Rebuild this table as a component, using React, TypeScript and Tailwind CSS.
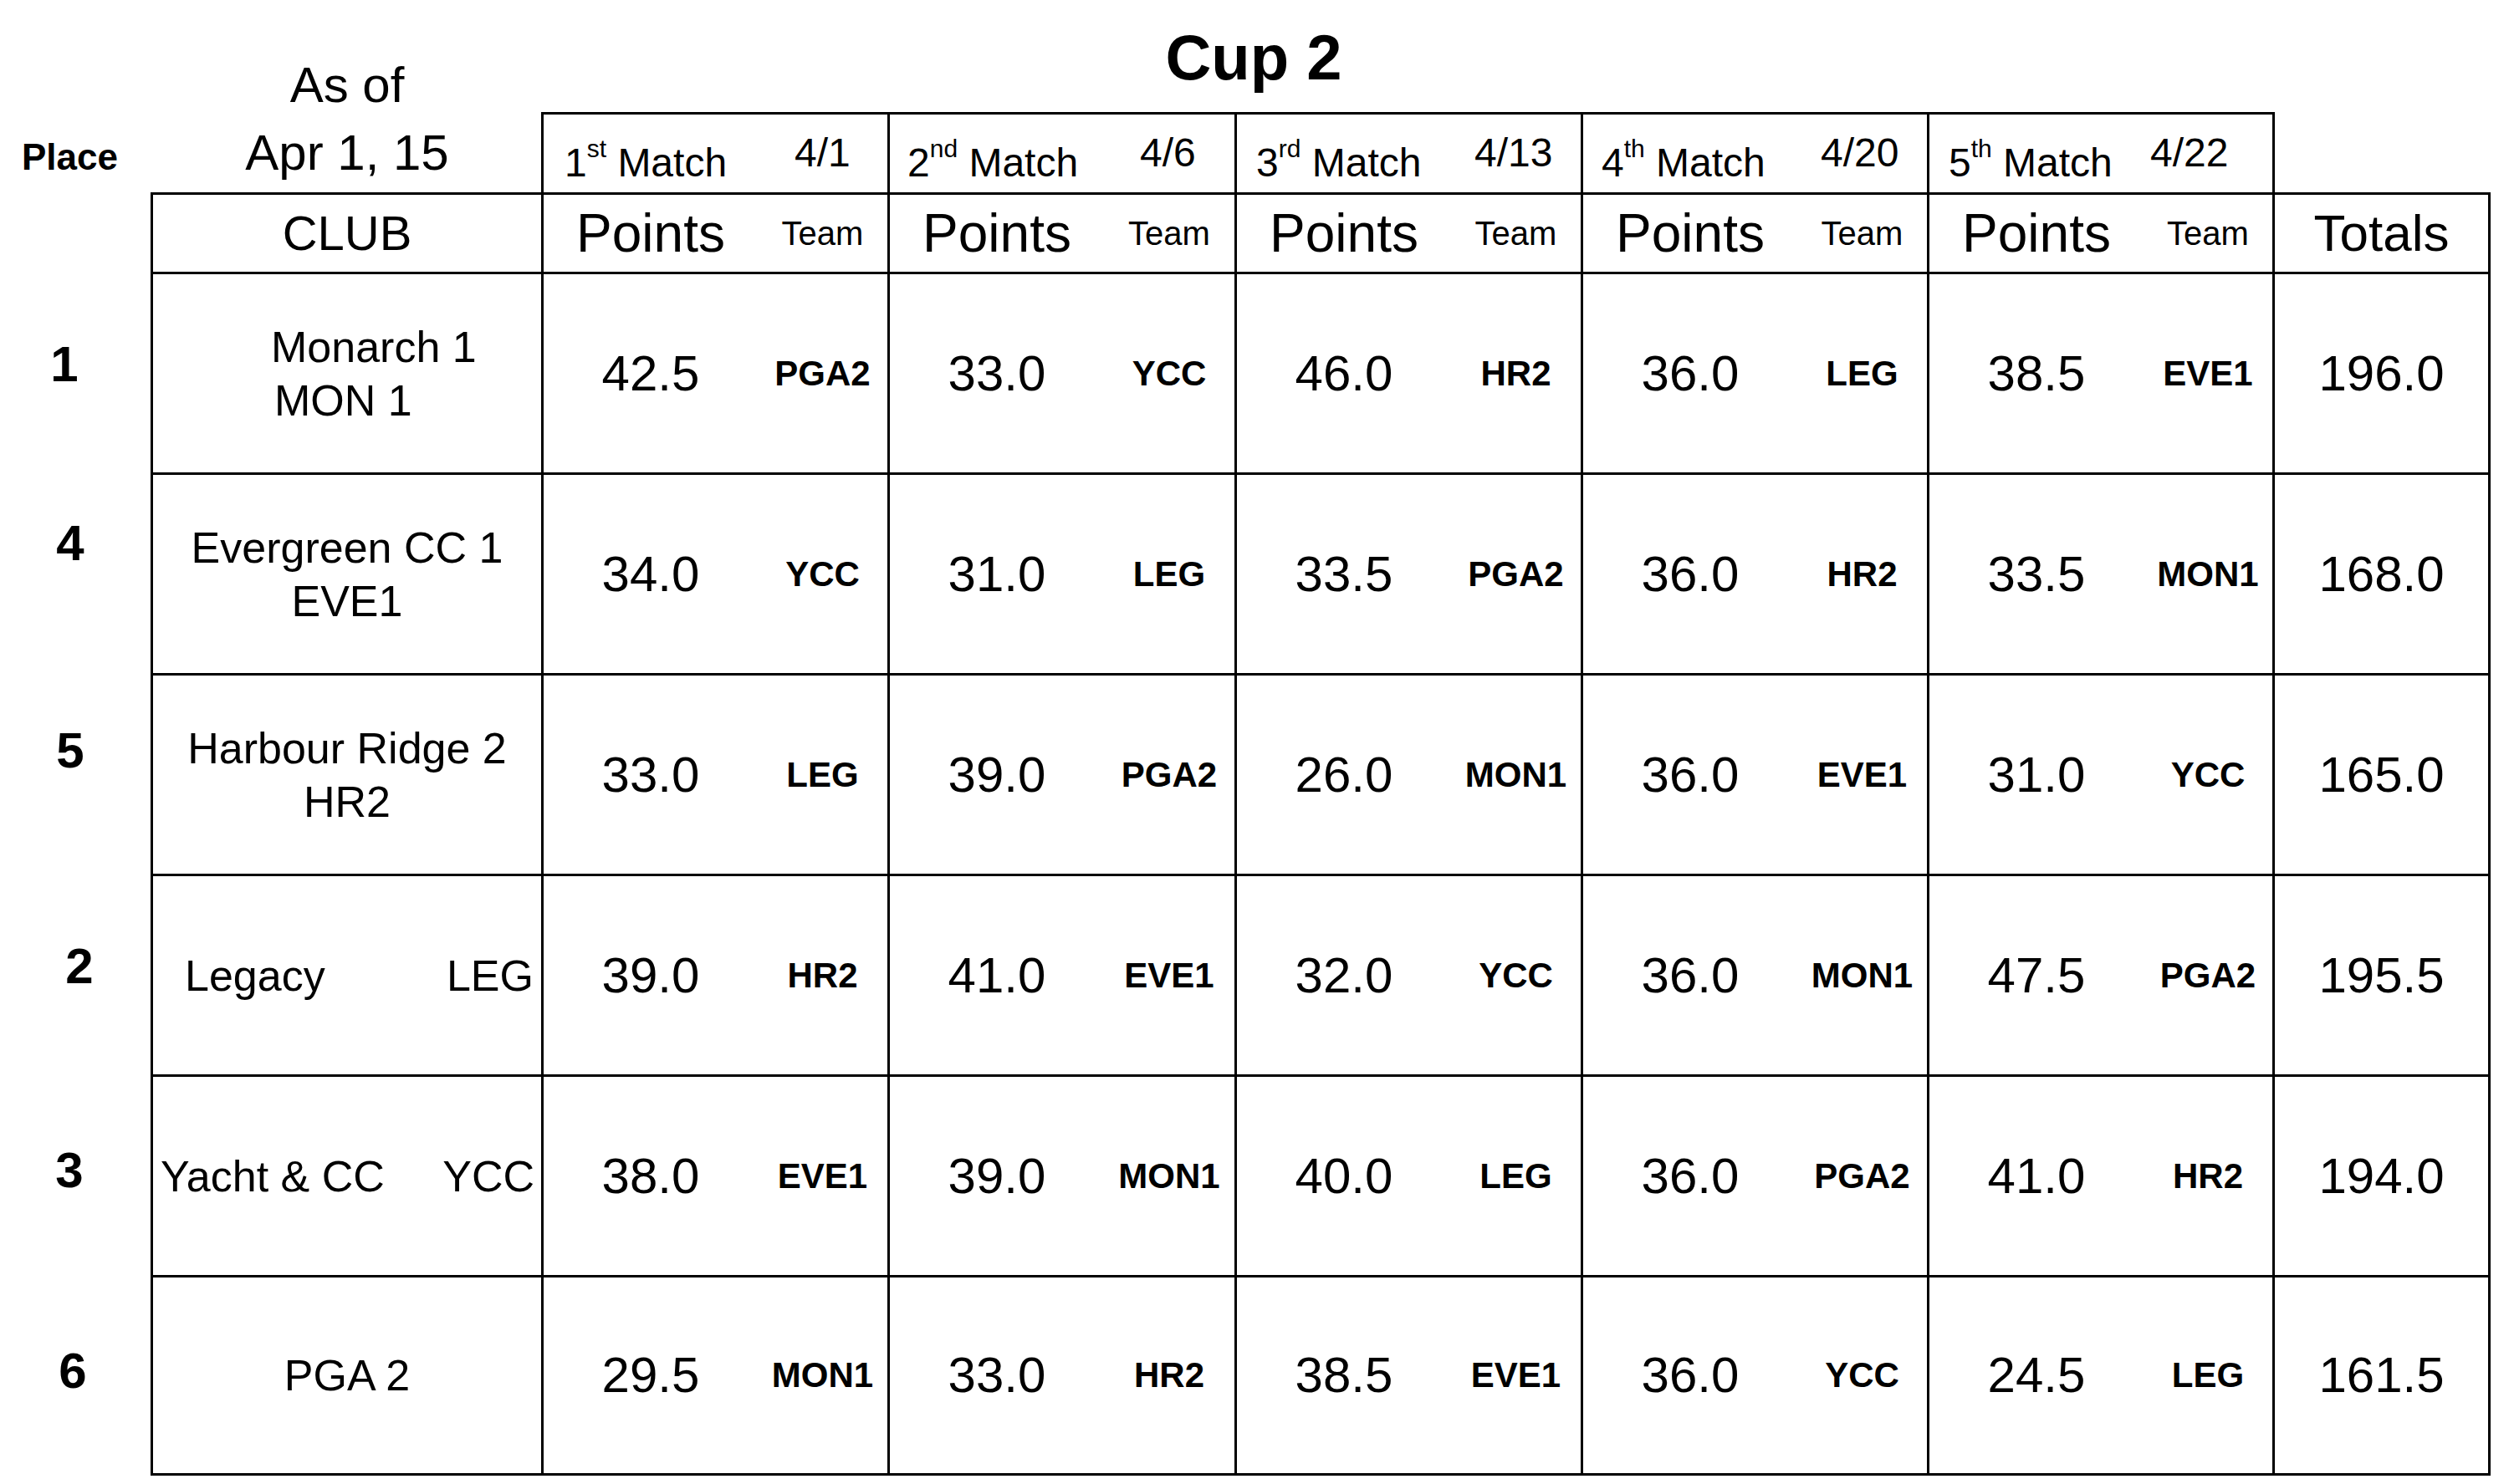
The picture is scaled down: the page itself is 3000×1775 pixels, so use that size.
const matches = [
  { n: "1", sup: "st", date: "4/1", pl: "pl-[25px]", lw: "w-[275px]", w: "w-[414px]" },
  { n: "2", sup: "nd", date: "4/6", pl: "pl-[21px]", lw: "w-[278px]", w: "w-[415px]" },
  { n: "3", sup: "rd", date: "4/13", pl: "pl-[23px]", lw: "w-[261px]", w: "w-[414px]" },
  { n: "4", sup: "th", date: "4/20", pl: "pl-[22px]", lw: "w-[262px]", w: "w-[414px]" },
  { n: "5", sup: "th", date: "4/22", pl: "pl-[23px]", lw: "w-[241px]", w: "w-[413px]" },
];

type Row = {
  place: string;
  placeCls: string;
  club: React.ReactNode;
  results: [string, string][];
  total: string;
};

const rows: Row[] = [
  {
    place: "1",
    placeCls: "pb-[18px] ml-[60px]",
    club: (
      <div className="flex flex-col items-start pl-[141px] leading-[64px]">
        <span>Monarch 1</span>
        <span className="ml-[4px]">MON 1</span>
      </div>
    ),
    results: [["42.5", "PGA2"], ["33.0", "YCC"], ["46.0", "HR2"], ["36.0", "LEG"], ["38.5", "EVE1"]],
    total: "196.0",
  },
  {
    place: "4",
    placeCls: "pb-[70px] ml-[67px]",
    club: (
      <div className="flex flex-col items-center leading-[64px]">
        <span>Evergreen CC 1</span>
        <span>EVE1</span>
      </div>
    ),
    results: [["34.0", "YCC"], ["31.0", "LEG"], ["33.5", "PGA2"], ["36.0", "HR2"], ["33.5", "MON1"]],
    total: "168.0",
  },
  {
    place: "5",
    placeCls: "pb-[54px] ml-[67px]",
    club: (
      <div className="flex flex-col items-center leading-[64px]">
        <span>Harbour Ridge 2</span>
        <span>HR2</span>
      </div>
    ),
    results: [["33.0", "LEG"], ["39.0", "PGA2"], ["26.0", "MON1"], ["36.0", "EVE1"], ["31.0", "YCC"]],
    total: "165.0",
  },
  {
    place: "2",
    placeCls: "pb-[18px] ml-[78px]",
    club: (
      <div className="flex justify-between pl-[38px] pr-[9px] leading-none">
        <span>Legacy</span>
        <span>LEG</span>
      </div>
    ),
    results: [["39.0", "HR2"], ["41.0", "EVE1"], ["32.0", "YCC"], ["36.0", "MON1"], ["47.5", "PGA2"]],
    total: "195.5",
  },
  {
    place: "3",
    placeCls: "pb-[10px] ml-[66px]",
    club: (
      <div className="flex justify-between pl-[9px] pr-[8px] leading-none">
        <span>Yacht &amp; CC</span>
        <span>YCC</span>
      </div>
    ),
    results: [["38.0", "EVE1"], ["39.0", "MON1"], ["40.0", "LEG"], ["36.0", "PGA2"], ["41.0", "HR2"]],
    total: "194.0",
  },
  {
    place: "6",
    placeCls: "pb-[10px] ml-[70px]",
    club: <div className="text-center leading-none">PGA 2</div>,
    results: [["29.5", "MON1"], ["33.0", "HR2"], ["38.5", "EVE1"], ["36.0", "YCC"], ["24.5", "LEG"]],
    total: "161.5",
  },
];

export default function App() {
  return (
    <div className="w-[3000px] h-[1775px] bg-white text-black font-['Liberation_Sans',Arial,sans-serif]">
      {/* top area: place label, date, title and match headers */}
      <div className="flex h-[230px]">
        <div className="w-[180px] flex items-end pl-[26px] pb-[20px] text-[44px] font-bold leading-none">
          Place
        </div>
        <div className="w-[467px] flex flex-col items-center justify-end pl-[3px] pb-[7px] text-[60px] leading-[81px]">
          <span>As of</span>
          <span>Apr 1, 15</span>
        </div>
        <div className="flex flex-col">
          <div className="h-[134px] w-[1704px] pt-[31px] text-center text-[76px] font-bold leading-none">
            Cup 2
          </div>
          <div className="flex h-[96px]">
            {matches.map((m, i) => (
              <div
                key={m.n}
                className={`${i === 4 ? "w-[416px] border-r-[3px]" : m.w} flex items-end border-l-[3px] border-t-[3px] border-black pb-[11px] text-[48px] leading-none ${m.pl}`}
              >
                <div className={`${m.lw} shrink-0 whitespace-nowrap`}>
                  {m.n}
                  <span className="text-[30px] align-[23px]">{m.sup}</span> Match
                </div>
                <span className="mb-[12px]">{m.date}</span>
              </div>
            ))}
          </div>
        </div>
      </div>

      {/* column headers */}
      <div className="flex h-[95px]">
        <div className="w-[180px]" />
        <div className="w-[467px] flex items-center justify-center border-l-[3px] border-t-[3px] border-black text-[58px] leading-none">
          CLUB
        </div>
        {matches.map((m) => (
          <div key={m.n} className={`${m.w} flex items-center border-l-[3px] border-t-[3px] border-black leading-none`}>
            <div className="w-[256px] text-center text-[64px]">Points</div>
            <div className="flex-1 text-center text-[40px]">Team</div>
          </div>
        ))}
        <div className="w-[261px] flex items-center justify-center border-x-[3px] border-t-[3px] border-black text-[62px] leading-none">
          Totals
        </div>
      </div>

      {/* data rows */}
      {rows.map((r, ri) => {
        const last = ri === rows.length - 1 ? "border-b-[3px]" : "";
        return (
          <div key={r.place} className="flex h-[240px] items-stretch">
            <div className="w-[180px] flex items-center">
              <span className={`w-[34px] text-center text-[60px] font-bold leading-none ${r.placeCls}`}>{r.place}</span>
            </div>
            <div className={`w-[467px] flex flex-col justify-center border-l-[3px] border-t-[3px] border-black text-[52px] ${last}`}>
              {r.club}
            </div>
            {r.results.map(([pts, team], i) => (
              <div
                key={i}
                className={`${matches[i].w} flex items-center border-l-[3px] border-t-[3px] border-black leading-none ${last}`}
              >
                <div className="w-[256px] text-center text-[60px]">{pts}</div>
                <div className="flex-1 text-center text-[42px] font-bold">{team}</div>
              </div>
            ))}
            <div className={`w-[261px] flex items-center justify-center border-x-[3px] border-t-[3px] border-black text-[60px] leading-none ${last}`}>
              {r.total}
            </div>
          </div>
        );
      })}
    </div>
  );
}
